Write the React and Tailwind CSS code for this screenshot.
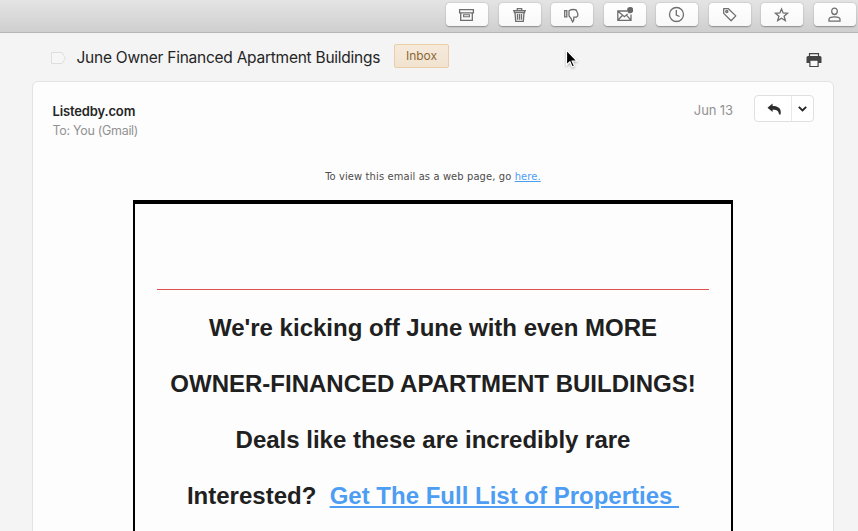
const stroke = { fill: "none", stroke: "#6e6e6e", strokeWidth: 1.3 };

const icons = [
  <g key="archive" {...stroke}>
    <path d="M1.6 3.6h13.8v3.2H1.6zM2.7 6.8h11.6v7.6H2.7z" />
    <path d="M5.6 8.8h5.8v2H5.6z" strokeWidth="1.1" />
  </g>,
  <g key="trash" {...stroke}>
    <path d="M2 4.6h13M6.3 4.4V2.7h4.4v1.7M3.4 4.8v1.7h10.2V4.8M4 6.6l.7 8.8h7.6l.7-8.8" />
    <path d="M6.5 8v5.8M8.5 8v5.8M10.5 8v5.8" />
  </g>,
  <g key="dislike" {...stroke}>
    <path d="M1.7 4.600h2.100v6.200H1.700zM6 10V4.800C7.400 3.900 8.500 3.500 10.400 3.500c2.600 0 3.200.4 3.400 1.900l1 2.200-.1 2.300-1.200 1.200h-2.600l-.3 3.500-1 1.300-.8-1.600C8.300 12.300 7.400 11.300 6 10z" />
  </g>,
  <g key="unread" {...stroke}>
    <path d="M11 5H1.800v9.400h13.200V8.500M2 5.300l6.400 5.400 3.300-2.800M2 14.200l4.400-5M14.800 14.200l-4.300-5" />
    <circle cx="14.200" cy="4.200" r="3.100" fill="#666" stroke="none" />
  </g>,
  <g key="clock" {...stroke}>
    <circle cx="8.500" cy="8.500" r="7" />
    <path d="M8.300 4v5l3.300 1.500" />
  </g>,
  <g key="tag" {...stroke}>
    <path d="M2.700 2.700h4.700l7.400 7.200-4.700 4.800-7.400-7.300z" strokeLinejoin="round" />
    <circle cx="5.800" cy="5.600" r="1.100" />
  </g>,
  <g key="star" {...stroke}>
    <path d="m8.500 3 1.600 4 4.400.3-3.400 2.900 1.200 4.300-3.800-2.300-3.800 2.300 1.200-4.300-3.400-2.900 4.400-.3z" />
  </g>,
  <g key="person" {...stroke}>
    <path d="M8.500 2.200c1.900 0 2.900 1.300 2.800 3-.1 1.900-1.200 3.300-2.800 3.300S5.800 7.100 5.700 5.200c-.1-1.700.9-3 2.800-3zM3 15.100v-1.800c0-1.900 2-2.500 5.500-2.500s5.500.6 5.500 2.500v1.800z" />
  </g>,
];

function Toolbar() {
  return (
    <div className="flex h-[33px] items-start justify-end gap-[10.57px] border-b border-[#b6b6b6] bg-linear-to-b from-[#e4e4e4] to-[#cfcfcf] pt-[3px] pr-[2px]">
      {icons.map((icon) => (
        <button key={icon.key} className="flex h-[23px] w-[42px] shrink-0 items-center justify-center rounded-[4px] bg-linear-to-b from-white to-[#f8f8f8] pr-px shadow-[0_0.5px_1.5px_rgba(0,0,0,0.35)]">
          <svg width="17" height="17" viewBox="0 0 17 17">{icon}</svg>
        </button>
      ))}
    </div>
  );
}

function Subject() {
  return (
    <div className="flex h-[48px] items-start pl-[51px] pr-[36.500px]">
      <svg className="mt-[19px] shrink-0" width="15" height="13" viewBox="0 0 15 13">
        <path d="M.5.5h10.500L14.300 6.200 11 11.500H.5z" fill="#f6f6f6" stroke="#dedede" />
      </svg>
      <h1 className="ml-[10.500px] mt-[13px] w-[303.500px] whitespace-nowrap text-[15.500px] leading-6 tracking-[-0.250px] text-[#252525]">June Owner Financed Apartment Buildings</h1>
      <span className="ml-[14px] mt-[11px] flex h-[24px] w-[55px] items-center justify-center rounded-[2px] border border-[#e8cfa8] bg-linear-to-b from-[#f6eadb] to-[#f2e3d0] text-[12px] text-[#8b6736]">Inbox</span>
      <svg className="ml-auto mt-[20px]" width="16" height="15" viewBox="0 0 16 15">
        <path d="M3.500 3V.7h9V3" fill="none" stroke="#444" strokeWidth="1.200" />
        <path d="M2 3h12q1.500 0 1.500 1.500V10H.5V4.500Q.5 3 2 3z" fill="#444" />
        <path d="M3.900 7.100h8.200v6.400H3.900z" fill="#f8f8f8" stroke="#444" strokeWidth="1.200" />
      </svg>
    </div>
  );
}

function Sender() {
  return (
    <div className="flex h-[86px] items-start pl-[19.500px] pr-[19px]">
      <div className="pt-[20px]">
        <p className="whitespace-nowrap text-[13px] font-semibold leading-[18px] tracking-[-0.150px] text-[#252525]">Listedby.com</p>
        <p className="mt-[2px] whitespace-nowrap text-[12.500px] leading-[18px] tracking-[-0.300px] text-[#929292]">To: You (Gmail)</p>
      </div>
      <span className="ml-auto mt-[19px] text-[13px] leading-[18px] tracking-[-0.100px] text-[#929292]">Jun 13</span>
      <div className="ml-[21px] mt-[13px] flex h-[27px] w-[60px] rounded-[4px] border border-[#e0e0e0] bg-white">
        <span className="flex w-[37px] items-center justify-center border-r border-[#e8e8e8] pl-[3px]">
          <svg width="15" height="12" viewBox="0 0 15 12">
            <path d="M5.600.5.500 4.800l5.100 4.200V6.700c4.200-.1 5.900.8 6.500 4.700h1.500c1.200-5.800-2.200-8.400-8-8.400z" fill="#2d2d2d" />
          </svg>
        </span>
        <span className="flex flex-1 items-center justify-center">
          <svg width="9" height="6" viewBox="0 0 9 6">
            <path d="m.8.8 3.700 3.700L8.200.8" fill="none" stroke="#222" strokeWidth="1.800" />
          </svg>
        </span>
      </div>
    </div>
  );
}

function EmailBody() {
  return (
    <div className="flex flex-col items-center">
      <p className="h-[32px] whitespace-nowrap pt-px font-['DejaVu_Sans_Condensed','DejaVu_Sans',sans-serif] text-[11px] leading-[16px] tracking-[0.130px] text-[#4c4c4c]">
        To view this email as a web page, go <a className="text-[#4d9df3] underline">here.</a>
      </p>
      <section className="h-[360px] w-[600px] border-x-2 border-t-4 border-black px-[22px] pt-[85px] font-['Liberation_Sans',Arial,sans-serif]">
        <hr className="border-t border-[#e2504d]" />
        <div className="mt-[10px] text-center text-[24px] font-bold leading-[56px] text-[#202020]">
          <p>We're kicking off June with even MORE</p>
          <p>OWNER-FINANCED APARTMENT BUILDINGS!</p>
          <p>Deals like these are incredibly rare</p>
          <p className="whitespace-pre">Interested?  <a className="text-[#4d9df3] underline">Get The Full List of Properties </a></p>
        </div>
      </section>
    </div>
  );
}

export default function App() {
  return (
    <main className="relative h-[531px] w-[858px] overflow-hidden bg-[#f4f4f4] font-['Inter',sans-serif]">
      <Toolbar />
      <Subject />
      <article className="ml-[32px] h-[480px] w-[802px] rounded-[6px] border border-[#e3e3e3] bg-[#fdfdfd]">
        <Sender />
        <EmailBody />
      </article>
      <svg className="absolute left-[563px] top-[48px] drop-shadow-[0_1px_1px_rgba(0,0,0,0.3)]" width="16" height="22" viewBox="0 0 16 22">
        <path d="M3.500 2v15l3.400-3.200 2.300 5.200 2.300-1-2.300-5H14z" fill="#000" stroke="#fff" strokeWidth="1.200" />
      </svg>
    </main>
  );
}
